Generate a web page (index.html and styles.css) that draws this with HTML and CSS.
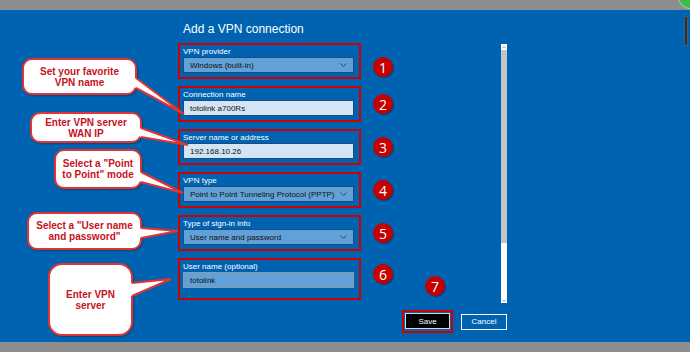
FILE: index.html
```html
<!DOCTYPE html>
<html>
<head>
    <title>Add a VPN connection</title>
    <link rel="stylesheet" href="styles.css">
</head>
<body>
    <div class="topbar">
        <span class="orb"></span>
    </div>
    <div class="screen">
        <span class="edge"></span>
        <div class="dialog">
            <h1>Add a VPN connection</h1>
            <div class="dialog-body">
                <div class="fields">
                    <div class="row">
                        <div class="field">
                            <span class="label">VPN provider</span>
                            <div class="select">Windows (built-in)<svg class="chev" width="7" height="4"><polyline points="0.5,0.5 3.5,3.5 6.5,0.5"/></svg></div>
                        </div>
                        <span class="badge down">1</span>
                    </div>
                    <div class="row">
                        <div class="field">
                            <span class="label">Connection name</span>
                            <div class="input">totolink a700Rs</div>
                        </div>
                        <span class="badge">2</span>
                    </div>
                    <div class="row">
                        <div class="field">
                            <span class="label">Server name or address</span>
                            <div class="input">192.168.10.26</div>
                        </div>
                        <span class="badge">3</span>
                    </div>
                    <div class="row">
                        <div class="field">
                            <span class="label">VPN type</span>
                            <div class="select">Point to Point Tunneling Protocol (PPTP)<svg class="chev" width="7" height="4"><polyline points="0.5,0.5 3.5,3.5 6.5,0.5"/></svg></div>
                        </div>
                        <span class="badge">4</span>
                    </div>
                    <div class="row">
                        <div class="field">
                            <span class="label">Type of sign-in info</span>
                            <div class="select">User name and password<svg class="chev" width="7" height="4"><polyline points="0.5,0.5 3.5,3.5 6.5,0.5"/></svg></div>
                        </div>
                        <span class="badge">5</span>
                    </div>
                    <div class="row row-last">
                        <div class="field field-last">
                            <span class="label">User name (optional)</span>
                            <div class="input input-dim">totolink</div>
                        </div>
                        <span class="badge up">6</span>
                    </div>
                </div>
                <div class="scrollbar">
                    <span class="arrow"><svg width="4" height="3"><polyline points="0,2.5 2,0.5 4,2.5"/></svg></span>
                    <span class="thumb"></span>
                    <span class="track"></span>
                    <span class="arrow"><svg width="4" height="3"><polyline points="0,0.5 2,2.5 4,0.5"/></svg></span>
                </div>
            </div>
            <div class="actions">
                <span class="badge badge-seven">7</span>
                <span class="save-frame"><button class="btn btn-save">Save</button></span>
                <button class="btn btn-cancel">Cancel</button>
            </div>
        </div>

        <div class="callout callout-name">
            Set your favorite<br>VPN name
            <svg width="1" height="1"><polygon points="110,19 112,18 160,54 112,28 110,27"/><polyline points="112,18 160,54 112,28"/></svg>
        </div>
        <div class="callout callout-server">
            Enter VPN server<br>WAN IP
            <svg width="1" height="1"><polygon points="107,15 109,14 156,31 109,23 107,22"/><polyline points="109,14 156,31 109,23"/></svg>
        </div>
        <div class="callout callout-type">
            Select a "Point<br>to Point" mode
            <svg width="1" height="1"><polygon points="83,22 85,21 127,42 85,31 83,30"/><polyline points="85,21 127,42 85,31"/></svg>
        </div>
        <div class="callout callout-signin">
            Select a "User name<br>and password"
            <svg width="1" height="1"><polygon points="110,15 112,14 149,17 112,24 110,23"/><polyline points="112,14 149,17 112,24"/></svg>
        </div>
        <div class="callout callout-user">
            Enter VPN<br>server
            <svg width="1" height="1"><polygon points="80,19 82,18 121,14 82,31 80,30"/><polyline points="82,18 121,14 82,31"/></svg>
        </div>
    </div>
    <div class="bottombar"></div>
</body>
</html>
```

FILE: styles.css
```css
body {
    margin: 0;
    width: 690px;
    height: 352px;
    overflow: hidden;
    background: #0063b1;
    font-family: "Liberation Sans", Arial, sans-serif;
}
.topbar,
.bottombar {
    height: 10px;
    background: #8e8e8e;
}
.topbar {
    position: relative;
    overflow: hidden;
}
.orb {
    position: absolute;
    right: -12px;
    top: -15px;
    width: 22px;
    height: 22px;
    border-radius: 50%;
    background: #3cbc4c;
    border: 1px solid #b8c4c0;
}
.screen {
    position: relative;
    height: 332px;
}
.edge {
    position: absolute;
    right: 2px;
    top: 6px;
    width: 2px;
    height: 28px;
    background: #26313d;
    border: 1px solid #4c5c6c;
}
.dialog {
    margin-left: 178px;
    width: 329px;
    padding-top: 9px;
}
h1 {
    margin: 0 0 4px;
    padding-left: 5px;
    font-size: 12px;
    line-height: 20px;
    font-weight: normal;
    color: #fff;
}
.dialog-body {
    display: flex;
}
.fields {
    flex: 1;
    display: flex;
    flex-direction: column;
    gap: 7px;
}
.row {
    display: flex;
    align-items: center;
    height: 36px;
}
.row-last {
    height: 42px;
}
.field {
    width: 183px;
    box-sizing: border-box;
    border: 2px solid #d00000;
    padding: 2px 5px 4px 3px;
}
.field-last {
    padding-bottom: 10px;
}
.label {
    display: block;
    font-size: 8px;
    line-height: 10px;
    color: #fff;
}
.select,
.input {
    height: 16px;
    box-sizing: border-box;
    border: 1px solid #1b4c7e;
    padding: 0 6px;
    font-size: 8px;
    color: #111;
    display: flex;
    align-items: center;
    justify-content: space-between;
}
.select {
    background: #62a1d7;
}
.input {
    background: #d3e5f5;
}
.input-dim {
    background: #62a1d7;
    border-color: #8a9bab;
}
.chev polyline {
    fill: none;
    stroke: #2c4a66;
    stroke-width: 1;
}
.badge {
    width: 20px;
    height: 20px;
    margin-left: 12px;
    border-radius: 50%;
    background: #c40000;
    color: #fff;
    font-family: "Open Sans", sans-serif;
    font-size: 14px;
    display: flex;
    align-items: center;
    justify-content: center;
    box-shadow: 1px 1px 1px rgba(0, 0, 0, 0.35);
}
.badge.down {
    margin-top: 12px;
}
.badge.up {
    margin-bottom: 10px;
}
.scrollbar {
    width: 6px;
    height: 259px;
    margin-top: 1px;
    background: #fff;
    display: flex;
    flex-direction: column;
}
.arrow {
    height: 6px;
    display: flex;
    align-items: center;
    justify-content: center;
}
.arrow polyline {
    fill: none;
    stroke: #777;
    stroke-width: 0.8;
}
.thumb {
    height: 193px;
    background: #c6c6c6;
}
.track {
    flex: 1;
}
.actions {
    position: relative;
    display: flex;
    justify-content: flex-end;
    align-items: center;
    gap: 8px;
    margin-top: 7px;
}
.badge-seven {
    position: absolute;
    left: 247px;
    top: -34px;
    margin: 0;
}
.save-frame {
    display: flex;
    border: 2px solid #d00000;
    padding: 1px 1px 2px;
}
.btn {
    height: 16px;
    padding: 0;
    font-family: "Liberation Sans", Arial, sans-serif;
    font-size: 8px;
    color: #fff;
}
.btn-save {
    width: 45px;
    background: #000;
    border: 1px solid #d8d8d8;
}
.btn-cancel {
    width: 46px;
    background: transparent;
    border: 1px solid #fff;
}
.callout {
    position: absolute;
    box-sizing: border-box;
    background: #fff;
    border: 2px solid #e03434;
    border-radius: 10px;
    display: flex;
    align-items: center;
    justify-content: center;
    text-align: center;
    color: #c8101e;
    font-weight: bold;
    font-size: 10px;
    line-height: 11px;
    box-shadow: 1px 1px 2px rgba(0, 0, 0, 0.3);
}
.callout svg {
    position: absolute;
    left: 0;
    top: 0;
    overflow: visible;
}
.callout polygon {
    fill: #fff;
}
.callout polyline {
    fill: none;
    stroke: #e03434;
    stroke-width: 2;
}
.callout-name {
    left: 22px;
    top: 48px;
    width: 115px;
    height: 37px;
}
.callout-server {
    left: 30px;
    top: 102px;
    width: 112px;
    height: 31px;
}
.callout-type {
    left: 54px;
    top: 139px;
    width: 88px;
    height: 40px;
}
.callout-signin {
    left: 27px;
    top: 202px;
    width: 115px;
    height: 38px;
}
.callout-user {
    left: 48px;
    top: 253px;
    width: 85px;
    height: 73px;
    border-radius: 14px;
}
```
